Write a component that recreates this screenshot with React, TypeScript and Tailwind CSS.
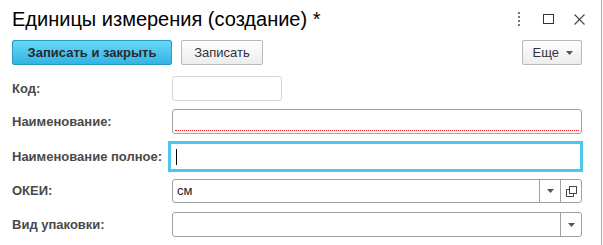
import React from "react";

const font = { fontFamily: '"Liberation Sans", Arial, sans-serif' };

function Dropdown() {
  return (
    <svg width="7" height="4" viewBox="0 0 7 4">
      <path d="M0 0h7L3.5 4z" fill="#555" />
    </svg>
  );
}

function Label({ children }: any) {
  return (
    <div className="w-[160px] shrink-0 text-[13px] font-bold text-[#4a4a4a]">
      {children}
    </div>
  );
}

export default function App() {
  return (
    <div
      className="w-[603px] h-[245px] bg-white overflow-hidden flex"
      style={font}
    >
      <div className="w-[602px] h-full border-r border-[#a8a8a8] pl-[12px] pr-[18px]">
        {/* header */}
        <div className="flex items-center h-[37px] pt-[1px]">
          <h1 className="text-[20px] text-black leading-none flex-1">
            Единицы измерения (создание) *
          </h1>
          <div className="flex items-center gap-[19px] mr-[-2px]">
            <div className="flex flex-col gap-[2px]">
              <span className="w-[2px] h-[2px] bg-[#777]" />
              <span className="w-[2px] h-[2px] bg-[#777]" />
              <span className="w-[2px] h-[2px] bg-[#777]" />
              <span className="w-[2px] h-[2px] bg-[#777]" />
            </div>
            <div className="w-[11px] h-[10px] border border-[#333] ml-[4px]" />
            <svg width="11" height="11" viewBox="0 0 11 11" className="ml-[1px]">
              <path d="M0.5 0.5L10.5 10.5M10.5 0.5L0.5 10.5" stroke="#444" strokeWidth="1.1" />
            </svg>
          </div>
        </div>

        {/* toolbar */}
        <div className="flex items-center mt-[3px] h-[25px]">
          <button className="w-[160px] h-[25px] rounded-[2px] border border-[#2a9ac4] bg-gradient-to-b from-[#66d8f8] to-[#30b4e4] text-[13px] font-bold text-[#2a2a2a]">
            Записать и закрыть
          </button>
          <button className="ml-[9px] w-[82px] h-[25px] rounded-[2px] border border-[#b9b9b9] bg-gradient-to-b from-white to-[#ececec] text-[13px] text-[#333]">
            Записать
          </button>
          <div className="flex-1" />
          <button className="w-[60px] h-[25px] rounded-[2px] border border-[#b9b9b9] bg-gradient-to-b from-white to-[#ececec] text-[13px] text-[#333] flex items-center justify-end pr-[8px] gap-[7px] mr-[1px]">
            Еще
            <Dropdown />
          </button>
        </div>

        {/* form */}
        <div className="flex flex-col mt-[11px]">
          <div className="flex items-center h-[25px]">
            <Label>Код:</Label>
            <div className="w-[110px] h-[25px] rounded-[3px] border border-[#d4d4d4]" />
          </div>

          <div className="flex items-center h-[25px] mt-[8px]">
            <Label>Наименование:</Label>
            <div className="w-[410px] h-[25px] rounded-[3px] border border-[#a0a0a0] relative">
              <div className="absolute left-[2px] right-[2px] bottom-[2px] border-b border-dotted border-[#e01010]" />
            </div>
          </div>

          <div className="flex items-center h-[31px] mt-[7px]">
            <div className="w-[156px] shrink-0 text-[13px] font-bold text-[#4a4a4a]">
              Наименование полное:
            </div>
            <div className="w-[416px] h-[31px] border-[3px] border-[#4cc8f0] flex items-center pl-[5px]">
              <span className="w-[1px] h-[16px] bg-black" />
            </div>
          </div>

          <div className="flex items-center h-[24px] mt-[7px]">
            <Label>ОКЕИ:</Label>
            <div className="w-[410px] h-[24px] rounded-[3px] border border-[#a0a0a0] flex">
              <div className="flex-1 flex items-center pl-[4px] text-[13px] text-[#222]">
                см
              </div>
              <div className="w-[21px] border-l border-[#a0a0a0] flex items-center justify-center">
                <Dropdown />
              </div>
              <div className="w-[21px] border-l border-[#a0a0a0] flex items-center justify-center">
                <svg width="11" height="11" viewBox="0 0 11 11">
                  <path d="M3.5 3.5H0.5V10.5H7.5V7.5" fill="none" stroke="#444" strokeWidth="1" />
                  <rect x="3.5" y="0.5" width="7" height="7" fill="none" stroke="#444" strokeWidth="1" />
                </svg>
              </div>
            </div>
          </div>

          <div className="flex items-center h-[25px] mt-[9px]">
            <Label>Вид упаковки:</Label>
            <div className="w-[410px] h-[25px] rounded-[3px] border border-[#a0a0a0] flex">
              <div className="flex-1" />
              <div className="w-[21px] border-l border-[#a0a0a0] flex items-center justify-center">
                <Dropdown />
              </div>
            </div>
          </div>
        </div>
      </div>
    </div>
  );
}
